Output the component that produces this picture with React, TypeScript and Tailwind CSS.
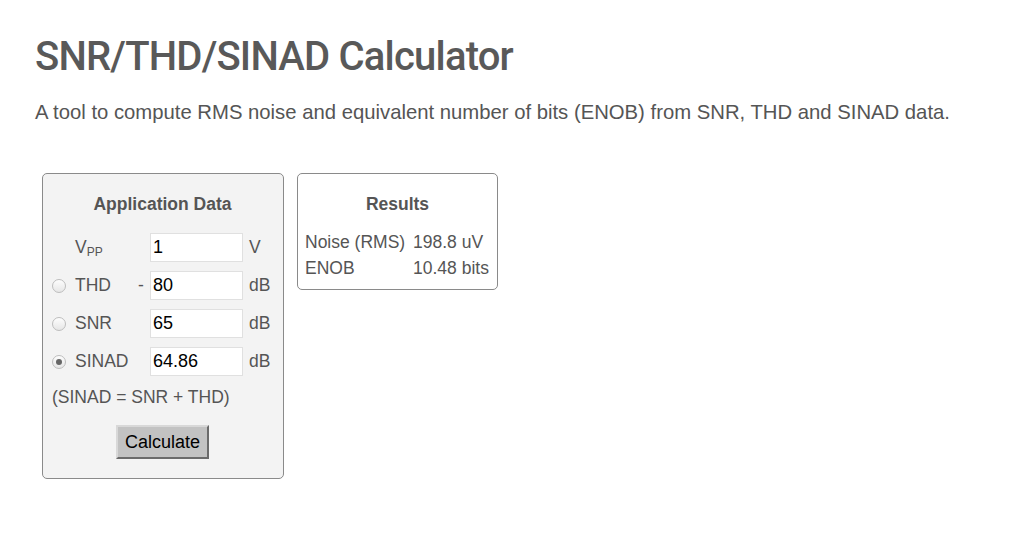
import { useState } from "react";

type Field = "thd" | "snr" | "sinad";

function Radio({ checked, onClick }: { checked: boolean; onClick: () => void }) {
  return (
    <button
      type="button"
      onClick={onClick}
      className="flex h-[14px] w-[14px] shrink-0 items-center justify-center rounded-full border border-[#bdbdbd] bg-gradient-to-b from-[#fdfdfd] to-[#e6e6e6]"
    >
      {checked && <span className="h-[6px] w-[6px] rounded-full bg-[#666]" />}
    </button>
  );
}

function Row({
  radio,
  label,
  dash,
  value,
  unit,
}: {
  radio?: React.ReactNode;
  label: React.ReactNode;
  dash?: boolean;
  value: string;
  unit: string;
}) {
  return (
    <div className="flex h-[29px] items-center">
      <div className="flex w-[23px] items-center">{radio}</div>
      <div className="w-[63px]">{label}</div>
      <div className="w-[12px]">{dash ? "-" : ""}</div>
      <input
        readOnly
        value={value}
        className="h-[29px] w-[93px] border border-[#e0e0e0] bg-white px-[2px] text-[18px] text-black outline-none"
      />
      <div className="ml-[6px]">{unit}</div>
    </div>
  );
}

export default function App() {
  const [field, setField] = useState<Field>("sinad");

  return (
    <div className="min-h-[548px] bg-white font-['Liberation_Sans',Arial,sans-serif] text-[#555]">
      <div className="px-[35px] pt-[33px]">
        <h1 className="font-['Roboto',sans-serif] text-[40px] font-medium leading-[48px] tracking-[-0.8px] text-[#595959]">
          SNR/THD/SINAD Calculator
        </h1>
        <p className="mt-[19px] text-[20.3px] leading-[24px] text-[#555]">
          A tool to compute RMS noise and equivalent number of bits (ENOB) from SNR, THD and SINAD data.
        </p>

        <div className="mt-[49px] flex items-start gap-[13px] pl-[7px] text-[17.5px]">
          {/* Application data */}
          <div className="w-[242px] rounded-[5px] border border-[#8a8a8a] bg-[#f3f3f3] pl-[9px] pr-[10px] pt-[18px] pb-[19px]">
            <div className="text-center font-bold leading-[24px]">Application Data</div>
            <div className="mt-[17px] flex flex-col gap-[9px]">
              <Row
                label={
                  <span>
                    V<sub className="text-[12px]">PP</sub>
                  </span>
                }
                value="1"
                unit="V"
              />
              <Row
                radio={<Radio checked={field === "thd"} onClick={() => setField("thd")} />}
                label="THD"
                dash
                value="80"
                unit="dB"
              />
              <Row
                radio={<Radio checked={field === "snr"} onClick={() => setField("snr")} />}
                label="SNR"
                value="65"
                unit="dB"
              />
              <Row
                radio={<Radio checked={field === "sinad"} onClick={() => setField("sinad")} />}
                label="SINAD"
                value="64.86"
                unit="dB"
              />
            </div>
            <div className="mt-[9px] leading-[24px]">(SINAD = SNR + THD)</div>
            <div className="mt-[16px] flex justify-center">
              <button
                type="button"
                className="h-[34px] w-[93px] border-[2px] border-t-[#d8d8d8] border-l-[#d8d8d8] border-r-[#6a6a6a] border-b-[#6a6a6a] bg-[#c2c2c2] text-[18px] text-black"
              >
                Calculate
              </button>
            </div>
          </div>

          {/* Results */}
          <div className="w-[201px] rounded-[5px] border border-[#8a8a8a] bg-white px-[7px] pt-[18px] pb-[8px]">
            <div className="text-center font-bold leading-[24px]">Results</div>
            <div className="mt-[13px] grid grid-cols-[108px_1fr] leading-[26px]">
              <div>Noise (RMS)</div>
              <div>198.8 uV</div>
              <div>ENOB</div>
              <div>10.48 bits</div>
            </div>
          </div>
        </div>
      </div>
    </div>
  );
}
